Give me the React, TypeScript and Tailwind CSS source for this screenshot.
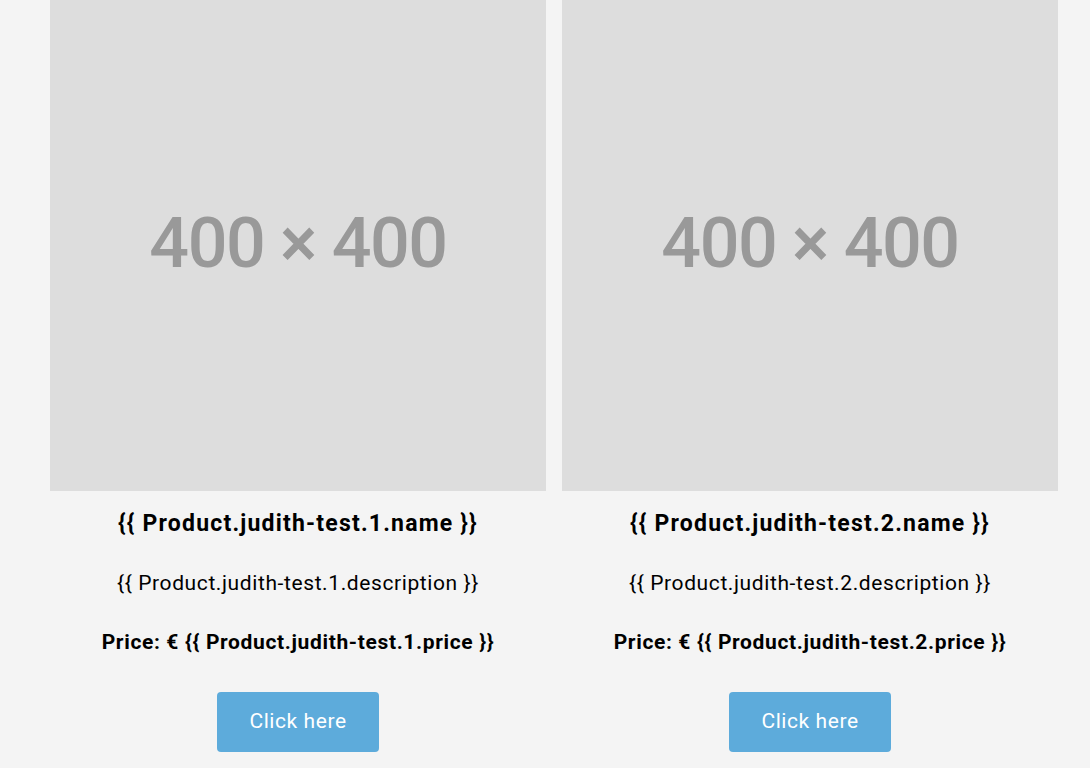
import React from "react";

interface Product {
  id: number;
}

const products: Product[] = [{ id: 1 }, { id: 2 }];

function ProductCard({ product }: { product: Product }) {
  const key = `Product.judith-test.${product.id}`;
  return (
    <div className="flex flex-col items-center text-black" style={{ fontFamily: "Roboto, 'Liberation Sans', sans-serif" }}>
      {/* placeholder image */}
      <div className="w-[496px] h-[496px] bg-[#dddddd] flex items-center justify-center">
        <span className="text-[#999999] text-[70px] leading-none font-medium tracking-[-1.5px]">400 × 400</span>
      </div>
      <h3 className="mt-[16px] text-[23px] leading-[33px] font-bold tracking-[1.2px] whitespace-nowrap">{`{{ ${key}.name }}`}</h3>
      <p className="mt-[28px] text-[21px] leading-[30px] tracking-[0.6px] whitespace-nowrap">{`{{ ${key}.description }}`}</p>
      <p className="mt-[29px] text-[21px] leading-[30px] font-bold tracking-[0.64px] whitespace-nowrap">{`Price: € {{ ${key}.price }}`}</p>
      <button className="mt-[35px] w-[162px] h-[60px] rounded-[4px] bg-[#5dabdb] text-white text-[21px] tracking-[0.57px]">
        Click here
      </button>
    </div>
  );
}

export default function App() {
  return (
    <div className="min-h-[768px] bg-[#f4f4f4] overflow-hidden">
      <div className="-mt-[5px] ml-[50px] flex gap-[16px]">
        {products.map((p) => (
          <ProductCard key={p.id} product={p} />
        ))}
      </div>
    </div>
  );
}
